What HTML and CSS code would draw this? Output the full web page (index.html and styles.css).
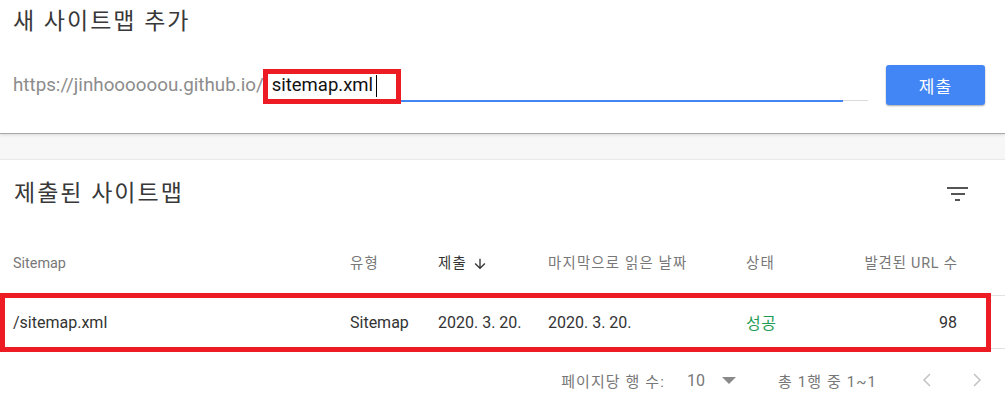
FILE: index.html
```html
<!DOCTYPE html>
<html lang="ko">
<head>
<meta charset="utf-8">
<title>사이트맵</title>
<link rel="stylesheet" href="styles.css">
</head>
<body>
<section class="card card-add">
  <h1 class="title">새 사이트맵 추가</h1>
  <div class="add-row">
    <span class="prefix">https://jinhoooooou.github.io/</span>
    <div class="field">
      <span class="field-text">sitemap.xml</span><span class="caret"></span>
      <span class="line-blue"></span>
      <span class="line-gray"></span>
      <span class="mark mark-input"></span>
    </div>
    <button class="submit">제출</button>
  </div>
</section>

<section class="card card-list">
  <div class="list-head">
    <h2 class="title">제출된 사이트맵</h2>
    <svg class="filter" width="21" height="14" viewBox="0 0 21 14" aria-hidden="true">
      <rect x="0" y="0" width="21" height="2" fill="#555"/>
      <rect x="4" y="6" width="14" height="2" fill="#555"/>
      <rect x="8" y="12" width="5" height="2" fill="#555"/>
    </svg>
  </div>

  <div class="row head">
    <span>Sitemap</span>
    <span class="ko">유형</span>
    <span class="sorted ko">제출<svg class="sort-arrow" width="16" height="16" viewBox="0 0 24 24" aria-hidden="true"><path d="M20 12l-1.41-1.41L13 16.17V4h-2v12.17l-5.58-5.59L4 12l8 8 8-8z" fill="#333"/></svg></span>
    <span class="ko">마지막으로 읽은 날짜</span>
    <span class="ko">상태</span>
    <span class="num ko">발견된 URL 수</span>
  </div>

  <div class="row data">
    <span>/sitemap.xml</span>
    <span>Sitemap</span>
    <span>2020. 3. 20.</span>
    <span>2020. 3. 20.</span>
    <span class="ok">성공</span>
    <span class="num">98</span>
    <span class="mark mark-row"></span>
  </div>

  <div class="pager">
    <span class="pager-label">페이지당 행 수:</span>
    <span class="pager-size">10</span>
    <svg class="pager-drop" width="14" height="7" viewBox="0 0 14 7" aria-hidden="true"><path d="M0 0h14L7 7z" fill="#8a8a8a"/></svg>
    <span class="pager-range">총 1행 중 1~1</span>
    <span class="pager-btn"><svg width="10" height="14" viewBox="0 0 10 14" aria-hidden="true"><path d="M8 1L2 7l6 6" fill="none" stroke="#c4c4c4" stroke-width="1.6"/></svg></span>
    <span class="pager-btn"><svg width="10" height="14" viewBox="0 0 10 14" aria-hidden="true"><path d="M2 1l6 6-6 6" fill="none" stroke="#c4c4c4" stroke-width="1.6"/></svg></span>
  </div>
</section>
</body>
</html>
```

FILE: styles.css
```css
html, body {
  margin: 0;
  padding: 0;
}

body {
  background: #f7f7f7;
  font-family: Roboto, "Noto Sans CJK KR", sans-serif;
  color: #333;
  overflow: hidden;
}

.card {
  background: #fff;
}

.card-add {
  position: relative;
  z-index: 1;
  height: 133px;
  box-sizing: border-box;
  padding-top: 6px;
  box-shadow: 0 1px 0 #a9a9a9, 0 2px 3px rgba(0, 0, 0, 0.12);
}

.title {
  margin: 0;
  font-weight: 400;
  font-size: 23px;
  line-height: 32px;
  letter-spacing: 2px;
  color: #383838;
  padding-left: 13px;
}

.add-row {
  display: flex;
  align-items: flex-start;
  margin-top: 27px;
  padding: 0 20px 0 13px;
}

.prefix {
  margin-top: 5px;
  font-size: 18.8px;
  line-height: 31px;
  color: #8c8c8c;
  white-space: nowrap;
}

.field {
  position: relative;
  flex: 1;
  height: 35px;
  margin-top: 4px;
  white-space: nowrap;
  padding-top: 1px;
  box-sizing: border-box;
}

.field-text {
  display: inline-block;
  padding-left: 8px;
  font-size: 18.5px;
  line-height: 31px;
  color: #111;
}

.caret {
  display: inline-block;
  width: 1px;
  height: 22px;
  margin-left: 3px;
  background: #000;
  vertical-align: -6px;
}

.line-blue {
  position: absolute;
  left: 0;
  right: 25px;
  top: 31px;
  height: 2px;
  background: #4285f4;
}

.line-gray {
  position: absolute;
  right: 0;
  width: 25px;
  top: 31px;
  height: 1px;
  background: #dadada;
}

.mark {
  position: absolute;
  box-sizing: border-box;
  border: 5px solid #ed1c24;
  pointer-events: none;
}

.mark-input {
  left: -1px;
  top: 0;
  width: 138px;
  height: 35px;
}

.submit {
  flex: none;
  width: 99px;
  height: 40px;
  margin-left: 18px;
  border: 0;
  border-radius: 3px;
  background: #4285f4;
  color: #fff;
  font: inherit;
  font-size: 17px;
  letter-spacing: 1px;
  box-shadow: 0 1px 2px rgba(0, 0, 0, 0.35);
}

.card-list {
  margin-top: 27px;
  height: 243px;
  box-shadow: 0 -1px 1px rgba(0, 0, 0, 0.05);
}

.list-head {
  display: flex;
  align-items: center;
  justify-content: space-between;
  height: 68px;
  padding: 0 37px 0 1px;
}

.list-head .title {
  padding-left: 13px;
}

.filter {
  display: block;
}

.row {
  display: grid;
  grid-template-columns: 337px 88px 110px 198px 1fr auto;
  padding: 0 48px 0 13px;
  box-sizing: border-box;
  white-space: nowrap;
}

.head {
  height: 67px;
  align-items: end;
  padding-bottom: 22px;
  font-size: 14.4px;
  line-height: 18px;
  color: #777;
}

.ko {
  letter-spacing: 1.2px;
}

.num.ko {
  letter-spacing: 0.8px;
  margin-right: -0.8px;
}

.sorted {
  display: flex;
  align-items: center;
  color: #333;
}

.sort-arrow {
  margin-left: 5px;
}

.data {
  position: relative;
  height: 54px;
  align-items: center;
  border-top: 1px solid #e2e2e2;
  border-bottom: 1px solid #e2e2e2;
  font-size: 16px;
  color: #333;
}

.num {
  text-align: right;
}

.ok {
  color: #1f9d55;
  letter-spacing: 0.5px;
}

.mark-row {
  left: 0;
  top: -3px;
  width: 991px;
  height: 59px;
}

.pager {
  display: flex;
  align-items: center;
  justify-content: flex-end;
  height: 62px;
  padding-right: 3px;
  font-size: 15px;
  color: #777;
}

.pager-label,
.pager-range {
  letter-spacing: 1.1px;
}

.pager-size {
  margin-left: 22px;
  font-size: 16px;
}

.pager-drop {
  margin-left: 17px;
}

.pager-range {
  margin-left: 42px;
  margin-right: 25px;
}

.pager-btn {
  display: flex;
  justify-content: center;
  align-items: center;
  width: 50px;
  height: 40px;
}
```
